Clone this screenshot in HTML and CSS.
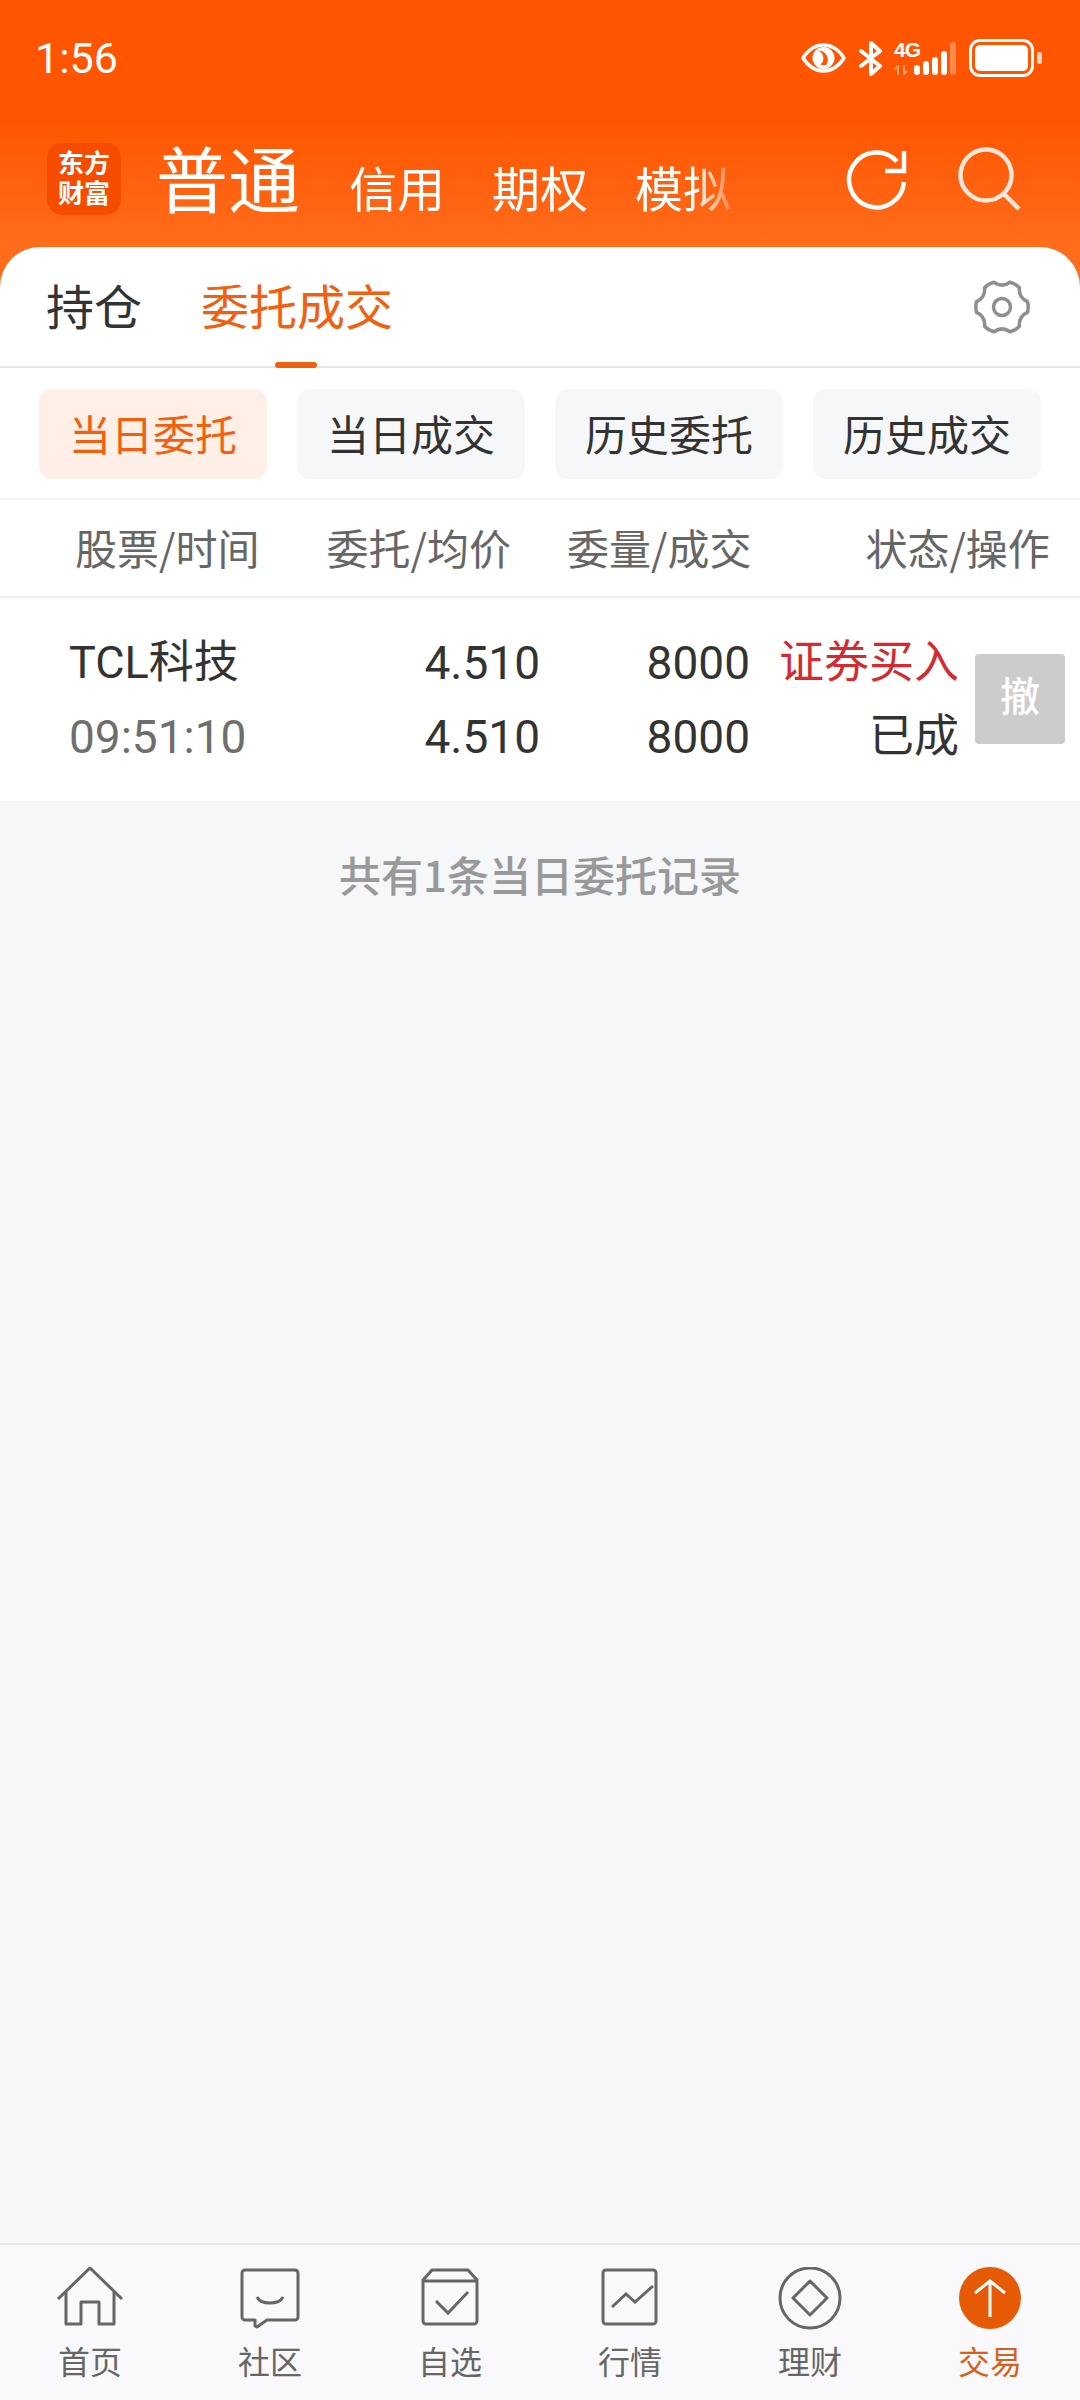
FILE: index.html
```html
<!DOCTYPE html>
<html>

<head>
    <title>交易</title>
    <link rel="stylesheet" href="styles.css">
</head>

<body>
    <header class="top">
        <div class="status">
            <span class="clock">1:56</span>
            <div class="status-icons">
                <svg class="ico-eye" width="45" height="30" viewBox="0 0 45 30">
                    <path d="M2 15C8 5.500 15 2 22.500 2S37 5.500 43 15C37 24.500 30 28 22.500 28S8 24.500 2 15Z" fill="none" stroke="#fff" stroke-width="3.500" stroke-linejoin="round" />
                    <circle cx="22.500" cy="15" r="11" fill="#fff" />
                    <path d="M22 7a8 8 0 0 1-7 12a8 8 0 0 0 4 4a9 9 0 0 0 3-16Z" fill="#ff5500" transform="rotate(-40 22.500 15) translate(1 -1)" />
                </svg>
                <svg width="23" height="35" viewBox="0 0 23 35">
                    <path d="M2 10l19 15-9 8V2l9 8L2 25" fill="none" stroke="#fff" stroke-width="4" stroke-linejoin="round" stroke-linecap="round" />
                </svg>
                <div class="net">
                    <div class="net-type">
                        <span class="four-g">4G</span>
                        <svg width="14" height="10" viewBox="0 0 14 10">
                            <path d="M4 10V1L1 4M10 0v9l3-3" fill="none" stroke="#ffa06c" stroke-width="2" />
                        </svg>
                    </div>
                    <div class="bars">
                        <i class="bar b1"></i>
                        <i class="bar b2"></i>
                        <i class="bar b3"></i>
                        <i class="bar b4"></i>
                        <i class="bar b5"></i>
                    </div>
                </div>
                <div class="battery">
                    <div class="battery-body"><div class="battery-fill"></div></div>
                    <div class="battery-nub"></div>
                </div>
            </div>
        </div>
        <div class="nav">
            <div class="logo">
                <span>东方</span>
                <span>财富</span>
            </div>
            <div class="nav-tabs">
                <span class="nav-main">普通</span>
                <span>信用</span>
                <span>期权</span>
                <span>模拟</span>
            </div>
            <div class="nav-actions">
                <svg width="62" height="62" viewBox="0 0 62 62">
                    <path d="M58 33A27.500 27.500 0 1 1 51 12.500" fill="none" stroke="#fff" stroke-width="4.500" />
                    <path d="M58 2V22H39" fill="none" stroke="#fff" stroke-width="4.500" />
                </svg>
                <svg class="ico-search" width="64" height="64" viewBox="0 0 64 64">
                    <circle cx="28" cy="28" r="25.500" fill="none" stroke="#fff" stroke-width="4.500" />
                    <path d="M46 47l15 15" fill="none" stroke="#fff" stroke-width="4.500" />
                </svg>
            </div>
        </div>
    </header>

    <main class="panel">
        <div class="tabs">
            <span class="tab">持仓</span>
            <span class="tab tab-on">委托成交</span>
            <svg class="gear" width="56" height="56" viewBox="0 0 56 56">
                <path d="M53.43 22.590Q55 28 53.43 33.410Q44.450 37.500 45.400 47.320Q41.500 51.400 36.030 52.730Q28 47 19.970 52.730Q14.500 51.400 10.600 47.320Q11.550 37.500 2.570 33.410Q1 28 2.570 22.590Q11.550 18.500 10.600 8.680Q14.500 4.600 19.970 3.270Q28 9 36.030 3.270Q41.500 4.600 45.400 8.680Q44.450 18.500 53.430 22.590Z" fill="none" stroke="#8f8f8f" stroke-width="3.500" stroke-linejoin="round" />
                <circle cx="28" cy="28" r="8.500" fill="none" stroke="#8f8f8f" stroke-width="3.500" />
            </svg>
        </div>

        <div class="filters">
            <span class="filter filter-on">当日委托</span>
            <span class="filter">当日成交</span>
            <span class="filter">历史委托</span>
            <span class="filter">历史成交</span>
        </div>

        <div class="thead">
            <span class="c1">股票/时间</span>
            <span class="c2">委托/均价</span>
            <span class="c3">委量/成交</span>
            <span class="c4">状态/操作</span>
        </div>

        <div class="order">
            <div class="cell c-name">
                <span>TCL科技</span>
                <span class="time">09:51:10</span>
            </div>
            <div class="cell c-num c-price">
                <span>4.510</span>
                <span>4.510</span>
            </div>
            <div class="cell c-num c-qty">
                <span>8000</span>
                <span>8000</span>
            </div>
            <div class="cell c-state">
                <span class="buy">证券买入</span>
                <span>已成</span>
            </div>
            <span class="cancel">撤</span>
        </div>

        <p class="summary">共有1条当日委托记录</p>
    </main>

    <nav class="bottom">
        <div class="item">
            <svg width="72" height="64" viewBox="0 0 72 64">
                <path d="M4 32L36 1l32 31" fill="none" stroke="#666" stroke-width="3" />
                <path d="M12 25v32h15V35h18v22h15V25" fill="none" stroke="#666" stroke-width="3" stroke-linejoin="round" />
            </svg>
            <span>首页</span>
        </div>
        <div class="item">
            <svg width="72" height="64" viewBox="0 0 72 64">
                <path d="M11 3h50a3 3 0 0 1 3 3v44a3 3 0 0 1-3 3H33l-10 7-2-1v-6H11a3 3 0 0 1-3-3V6a3 3 0 0 1 3-3Z" fill="none" stroke="#666" stroke-width="3" stroke-linejoin="round" />
                <path d="M23 30c4 8 22 8 26 0" fill="none" stroke="#666" stroke-width="3" />
            </svg>
            <span>社区</span>
        </div>
        <div class="item">
            <svg width="72" height="64" viewBox="0 0 72 64">
                <path d="M9 13l9-10h36l9 10v41a3 3 0 0 1-3 3H12a3 3 0 0 1-3-3ZM9 14h54" fill="none" stroke="#666" stroke-width="3" stroke-linejoin="round" />
                <path d="M22 34l12 12 20-21" fill="none" stroke="#666" stroke-width="3" />
            </svg>
            <span>自选</span>
        </div>
        <div class="item">
            <svg width="72" height="64" viewBox="0 0 72 64">
                <rect x="9" y="3" width="53" height="54" rx="3" fill="none" stroke="#666" stroke-width="3" />
                <path d="M19 40l14-13 9 8 18-16" transform="translate(-1 0)" fill="none" stroke="#666" stroke-width="3" />
            </svg>
            <span>行情</span>
        </div>
        <div class="item">
            <svg width="72" height="64" viewBox="0 0 72 64">
                <circle cx="36" cy="31" r="30" fill="none" stroke="#666" stroke-width="3" />
                <path d="M36 14l17 17-17 17-17-17Z" fill="none" stroke="#666" stroke-width="3" stroke-linejoin="round" />
            </svg>
            <span>理财</span>
        </div>
        <div class="item item-on">
            <svg width="72" height="64" viewBox="0 0 72 64">
                <circle cx="36" cy="31" r="31" fill="#e65a06" />
                <path d="M36 50V14M21 26l15-12 15 12" fill="none" stroke="#fff" stroke-width="3" />
            </svg>
            <span>交易</span>
        </div>
    </nav>
</body>

</html>
```

FILE: styles.css
```css
* {
    box-sizing: border-box;
}

body {
    margin: 0;
    width: 1080px;
    height: 2400px;
    display: flex;
    flex-direction: column;
    background-color: #f6f7f9;
    font-family: "Noto Sans CJK SC", "Noto Sans", sans-serif;
    color: #333;
}

/* header */
.top {
    height: 287px;
    flex: none;
    background: linear-gradient(180deg, #ff5500 0, #ff5500 120px, #ff6d1c 247px);
    color: #fff;
}

.status {
    height: 116px;
    padding: 0 38px 0 35px;
    display: flex;
    justify-content: space-between;
    align-items: center;
}

.clock {
    font-family: Roboto, sans-serif;
    font-size: 43px;
    font-weight: 400;
}

.status-icons {
    display: flex;
    align-items: center;
}

.ico-eye {
    margin-right: 13px;
}

.net {
    display: flex;
    align-items: flex-end;
    margin-left: 12px;
}

.net-type {
    display: flex;
    flex-direction: column;
    width: 24px;
    margin-right: -4px;
}

.four-g {
    font-family: "Liberation Sans", sans-serif;
    font-weight: bold;
    font-size: 21px;
    line-height: 18px;
    letter-spacing: -1px;
    margin-bottom: 6px;
}

.bars {
    display: flex;
    align-items: flex-end;
    gap: 3px;
    height: 33px;
}

.bar {
    width: 6px;
    border-radius: 3px;
    background-color: #fff;
}

.b1 { height: 10px; }
.b2 { height: 14px; }
.b3 { height: 18px; }
.b4 { height: 24px; }
.b5 { height: 33px; background-color: #ff8a4c; }

.battery {
    display: flex;
    align-items: center;
    margin-left: 13px;
}

.battery-body {
    width: 65px;
    height: 38px;
    border: 3px solid #fff;
    border-radius: 11px;
    padding: 3px;
}

.battery-fill {
    width: 100%;
    height: 100%;
    background-color: #fff;
    border-radius: 5px;
}

.battery-nub {
    width: 5px;
    height: 12px;
    margin-left: 3px;
    border-radius: 2px;
    background-color: #ffd5bd;
}

.nav {
    display: flex;
    align-items: flex-start;
    padding-left: 47px;
}

.logo {
    width: 74px;
    height: 72px;
    margin-top: 27px;
    border-radius: 15px;
    background-color: #f64c00;
    color: #fff;
    text-align: center;
    font-family: "Liberation Sans", "Noto Sans CJK SC", sans-serif;
    font-size: 26px;
    font-weight: 700;
    padding-top: 6px;
}

.logo span {
    display: block;
    line-height: 30px;
}

.nav-tabs {
    display: flex;
    align-items: baseline;
    gap: 47px;
    width: 575px;
    margin-left: 35px;
    padding-top: 18px;
    font-size: 48px;
    line-height: 84px;
    -webkit-mask-image: linear-gradient(90deg, #000 540px, transparent 585px);
    mask-image: linear-gradient(90deg, #000 540px, transparent 585px);
}

.nav-main {
    font-size: 72px;
    margin-right: 2px;
}

.nav-actions {
    display: flex;
    gap: 50px;
    margin-left: 115px;
    padding-top: 33px;
}

.ico-search {
    margin-top: -2px;
    opacity: 0.85;
}

/* white panel, its round corners sit on the header */
.panel {
    flex: 1;
    margin-top: -40px;
}

.tabs {
    height: 121px;
    display: flex;
    align-items: center;
    padding: 0 50px 0 46px;
    background-color: #fff;
    border-radius: 40px 40px 0 0;
    border-bottom: 2px solid #e5e5e5;
    font-size: 48px;
}

.tab {
    margin-right: 59px;
    padding-bottom: 6px;
}

.tab-on {
    color: #f0600f;
    position: relative;
}

.tab-on::after {
    content: "";
    position: absolute;
    left: 74px;
    bottom: -23px;
    width: 42px;
    height: 6px;
    border-radius: 3px;
    background-color: #f0600f;
}

.gear {
    margin-left: auto;
}

.filters {
    height: 132px;
    padding: 21px 38px 21px 39px;
    display: flex;
    gap: 30px;
    background-color: #fff;
    border-bottom: 2px solid #f2f2f2;
}

.filter {
    width: 228px;
    height: 90px;
    border-radius: 13px;
    background-color: #f6f7f9;
    font-size: 42px;
    line-height: 88px;
    text-align: center;
}

.filter-on {
    background-color: #ffefe7;
    color: #f0600f;
}

.thead {
    height: 98px;
    display: flex;
    align-items: center;
    padding-bottom: 3px;
    background-color: #fff;
    border-bottom: 2px solid #eee;
    font-size: 42px;
    color: #666;
}

.c1 { margin-left: 75px; }
.c2 { margin-left: 67px; }
.c3 { margin-left: 56px; }
.c4 { margin-left: 114px; }

.order {
    height: 203px;
    display: flex;
    align-items: center;
    background-color: #fff;
    font-family: Roboto, "Noto Sans CJK SC", sans-serif;
    font-size: 45px;
}

.cell {
    display: flex;
    flex-direction: column;
    line-height: 74px;
}

.c-name {
    width: 360px;
    padding-left: 69px;
}

.time {
    font-size: 46px;
    color: #6e6e6e;
}

.c-num {
    text-align: right;
    font-size: 46px;
}

.c-price { width: 180px; }
.c-qty { width: 210px; }

.c-state {
    width: 209px;
    text-align: right;
}

.buy {
    color: #d42a30;
}

.cancel {
    width: 90px;
    height: 90px;
    margin: -2px 0 0 16px;
    border-radius: 4px;
    background-color: #cccccc;
    color: #fff;
    font-size: 40px;
    font-weight: 500;
    line-height: 88px;
    text-align: center;
}

.summary {
    margin: 44px 0 0;
    text-align: center;
    font-size: 42px;
    font-weight: 500;
    line-height: 58px;
    color: #999;
}

/* bottom bar */
.bottom {
    height: 157px;
    flex: none;
    display: flex;
    background-color: #f9f9fb;
    border-top: 2px solid #e6e6e8;
}

.item {
    width: 180px;
    display: flex;
    flex-direction: column;
    align-items: center;
    padding-top: 22px;
    font-size: 32px;
    line-height: 40px;
    color: #666;
}

.item span {
    margin-top: 9px;
}

.item-on {
    color: #d9601a;
}
```
